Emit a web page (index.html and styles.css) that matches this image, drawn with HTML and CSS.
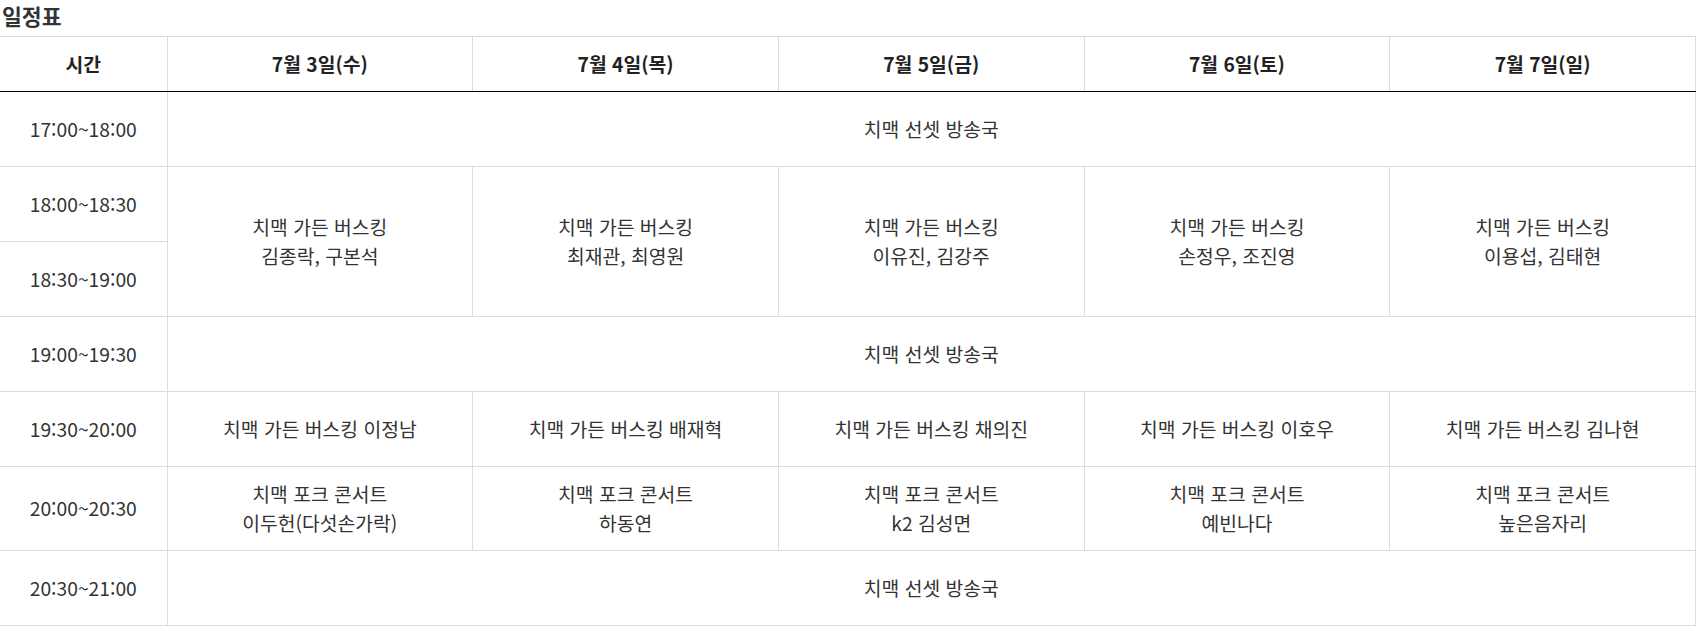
FILE: index.html
```html
<!DOCTYPE html>
<html lang="ko">
<head>
<meta charset="utf-8">
<title>일정표</title>
<link rel="stylesheet" href="styles.css">
</head>
<body>
<h2 class="title">일정표</h2>
<table class="schedule">
  <colgroup>
    <col class="col-time">
    <col class="col-day"><col class="col-day"><col class="col-day"><col class="col-day"><col class="col-day">
  </colgroup>
  <thead>
    <tr>
      <th>시간</th>
      <th>7월 3일(수)</th>
      <th>7월 4일(목)</th>
      <th>7월 5일(금)</th>
      <th>7월 6일(토)</th>
      <th>7월 7일(일)</th>
    </tr>
  </thead>
  <tbody>
    <tr>
      <td>17:00~18:00</td>
      <td colspan="5">치맥 선셋 방송국</td>
    </tr>
    <tr>
      <td>18:00~18:30</td>
      <td rowspan="2">치맥 가든 버스킹<br>김종락, 구본석</td>
      <td rowspan="2">치맥 가든 버스킹<br>최재관, 최영원</td>
      <td rowspan="2">치맥 가든 버스킹<br>이유진, 김강주</td>
      <td rowspan="2">치맥 가든 버스킹<br>손정우, 조진영</td>
      <td rowspan="2">치맥 가든 버스킹<br>이용섭, 김태현</td>
    </tr>
    <tr>
      <td>18:30~19:00</td>
    </tr>
    <tr>
      <td>19:00~19:30</td>
      <td colspan="5">치맥 선셋 방송국</td>
    </tr>
    <tr>
      <td>19:30~20:00</td>
      <td>치맥 가든 버스킹 이정남</td>
      <td>치맥 가든 버스킹 배재혁</td>
      <td>치맥 가든 버스킹 채의진</td>
      <td>치맥 가든 버스킹 이호우</td>
      <td>치맥 가든 버스킹 김나현</td>
    </tr>
    <tr class="tall">
      <td>20:00~20:30</td>
      <td>치맥 포크 콘서트<br>이두헌(다섯손가락)</td>
      <td>치맥 포크 콘서트<br>하동연</td>
      <td>치맥 포크 콘서트<br>k2 김성면</td>
      <td>치맥 포크 콘서트<br>예빈나다</td>
      <td>치맥 포크 콘서트<br>높은음자리</td>
    </tr>
    <tr>
      <td>20:30~21:00</td>
      <td colspan="5">치맥 선셋 방송국</td>
    </tr>
  </tbody>
</table>
</body>
</html>
```

FILE: styles.css
```css
html, body {
  margin: 0;
  padding: 0;
  background: #fff;
}
body {
  font-family: "Noto Sans CJK KR", "Noto Sans", sans-serif;
  color: #333;
}
.title {
  margin: 0;
  padding: 0 0 0 2px;
  height: 36px;
  font-size: 21.6px;
  line-height: 32px;
  font-weight: 700;
  color: #333;
}
.schedule {
  width: 1696px;
  border-collapse: collapse;
  table-layout: fixed;
  font-size: 19.3px;
  line-height: 29px;
}
.col-time {
  width: 167px;
}
.schedule th,
.schedule td {
  border: 1px solid #ddd;
  text-align: center;
  vertical-align: middle;
  padding: 0 8px;
}
.schedule th:first-child,
.schedule td:first-child {
  border-left: none;
}
.schedule thead tr {
  height: 55px;
}
.schedule th {
  font-weight: 700;
  color: #222;
  border-bottom: 1px solid #000;
}
.schedule tbody tr {
  height: 75px;
}
.schedule tbody tr.tall {
  height: 84px;
}
```
